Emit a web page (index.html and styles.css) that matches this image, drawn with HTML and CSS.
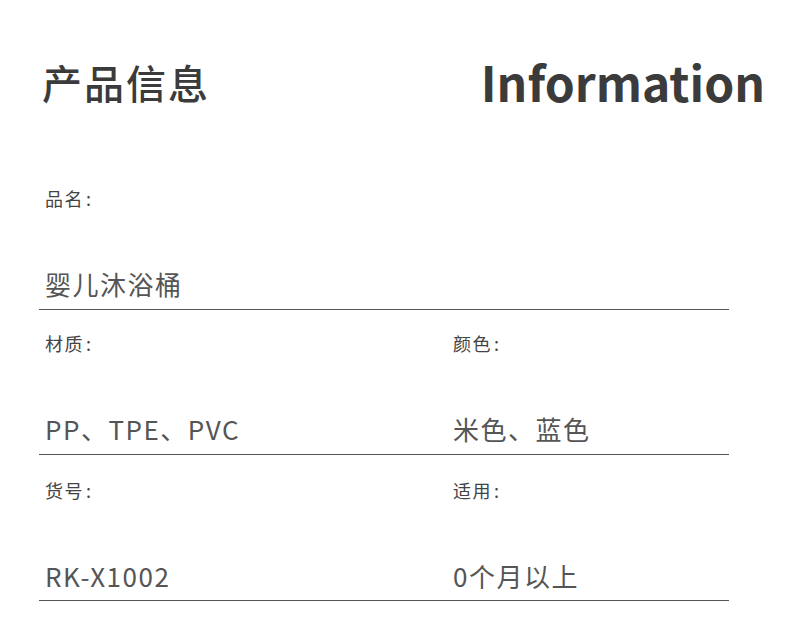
FILE: index.html
```html
<!DOCTYPE html>
<html lang="zh">
<head>
<meta charset="utf-8">
<link rel="stylesheet" href="styles.css">
</head>
<body>
<div class="page">
  <header class="head">
    <h1 class="title-cn">产品信息</h1>
    <div class="title-en">Information</div>
  </header>
  <section class="table">
    <div class="row single">
      <div class="cell">
        <div class="label">品名<span class="colon">:</span></div>
        <div class="value">婴儿沐浴桶</div>
      </div>
    </div>
    <div class="row">
      <div class="cell">
        <div class="label">材质<span class="colon">:</span></div>
        <div class="value">PP、TPE、PVC</div>
      </div>
      <div class="cell">
        <div class="label">颜色<span class="colon">:</span></div>
        <div class="value">米色、蓝色</div>
      </div>
    </div>
    <div class="row">
      <div class="cell">
        <div class="label">货号<span class="colon">:</span></div>
        <div class="value">RK-X1002</div>
      </div>
      <div class="cell">
        <div class="label">适用<span class="colon">:</span></div>
        <div class="value">0个月以上</div>
      </div>
    </div>
  </section>
</div>
</body>
</html>
```

FILE: styles.css
```css
html, body {
  margin: 0;
  padding: 0;
  background: #ffffff;
}
.page {
  width: 790px;
  height: 620px;
  font-family: "Noto Sans CJK SC", "Noto Sans", sans-serif;
  color: #444;
}
.head {
  display: flex;
  justify-content: space-between;
  align-items: flex-start;
  padding: 52px 25px 0 42px;
  height: 110px;
  box-sizing: border-box;
}
.title-cn {
  margin: 0;
  font-size: 40px;
  font-weight: 500;
  line-height: 60px;
  color: #3b3b3b;
  letter-spacing: 2px;
}
.title-en {
  font-family: "Noto Sans CJK SC", "Noto Sans", sans-serif;
  font-weight: 700;
  font-size: 48px;
  line-height: 60px;
  color: #3b3b3b;
  margin-top: -1px;
}
.table {
  margin: 0 61px 0 39px;
  padding-top: 76px;
}
.row {
  display: grid;
  grid-template-columns: 408px 1fr;
  border-bottom: 1.5px solid #555;
}
.row.single {
  grid-template-columns: 1fr;
}
.cell {
  padding: 21px 0 0 6px;
  display: flex;
  flex-direction: column;
}
.row.single .cell {
  padding-top: 0;
}
.row:last-child .cell {
  padding-top: 23px;
}
.label {
  font-size: 18px;
  line-height: 24px;
  color: #444;
  letter-spacing: 1.5px;
}
.colon {
  margin-left: 2px;
}
.value {
  margin-top: 56px;
  font-size: 26px;
  line-height: 36px;
  font-weight: 400;
  color: #555;
  letter-spacing: 1.5px;
  padding-bottom: 7px;
}
.row:last-child .value {
  padding-bottom: 6px;
}
```
